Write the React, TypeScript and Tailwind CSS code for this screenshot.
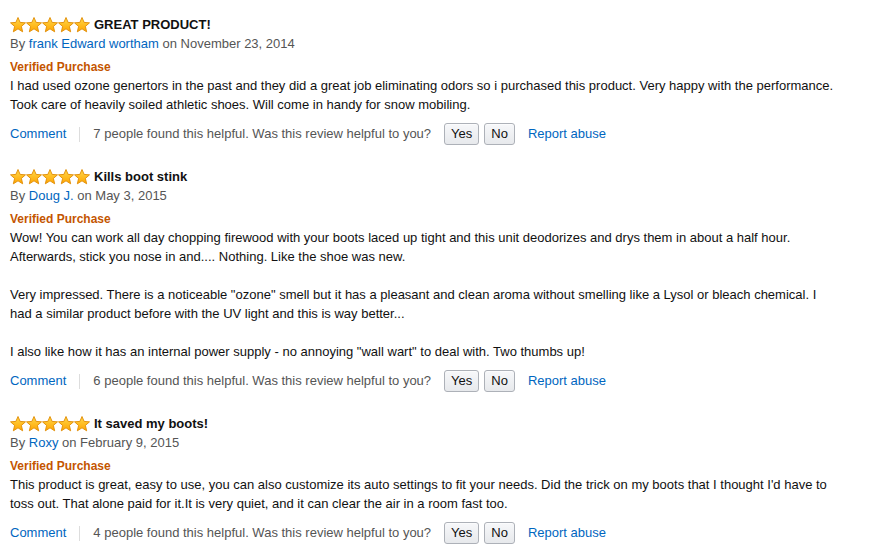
import React from 'react';

type Review = {
  title: string;
  author: string;
  date: string;
  paragraphs: string[];
  helpful: number;
};

const REVIEWS: Review[] = [
  {
    title: 'GREAT PRODUCT!',
    author: 'frank Edward wortham',
    date: 'November 23, 2014',
    paragraphs: [
      'I had used ozone genertors in the past and they did a great job eliminating odors so i purchased this product. Very happy with the performance. Took care of heavily soiled athletic shoes. Will come in handy for snow mobiling.',
    ],
    helpful: 7,
  },
  {
    title: 'Kills boot stink',
    author: 'Doug J.',
    date: 'May 3, 2015',
    paragraphs: [
      'Wow! You can work all day chopping firewood with your boots laced up tight and this unit deodorizes and drys them in about a half hour. Afterwards, stick you nose in and.... Nothing. Like the shoe was new.',
      'Very impressed. There is a noticeable "ozone" smell but it has a pleasant and clean aroma without smelling like a Lysol or bleach chemical. I had a similar product before with the UV light and this is way better...',
      'I also like how it has an internal power supply - no annoying "wall wart" to deal with. Two thumbs up!',
    ],
    helpful: 6,
  },
  {
    title: 'It saved my boots!',
    author: 'Roxy',
    date: 'February 9, 2015',
    paragraphs: [
      "This product is great, easy to use, you can also customize its auto settings to fit your needs. Did the trick on my boots that I thought I'd have to toss out. That alone paid for it.It is very quiet, and it can clear the air in a room fast too.",
    ],
    helpful: 4,
  },
];

const Star = () => (
  <svg width="16" height="16" viewBox="0 0 16 16" className="block overflow-visible">
    <defs>
      <linearGradient id="starFill" x1="0" y1="0" x2="0" y2="1">
        <stop offset="0" stopColor="#ffd84a" />
        <stop offset="1" stopColor="#ffa500" />
      </linearGradient>
    </defs>
    <path
      d="M8 0.5 L10.1 5.4 L15.5 5.85 L11.4 9.4 L12.65 14.8 L8 11.85 L3.35 14.8 L4.6 9.4 L0.5 5.85 L5.9 5.4 Z"
      fill="url(#starFill)"
      stroke="#e08a00"
      strokeWidth="0.9"
      strokeLinejoin="round"
    />
  </svg>
);

const Stars = () => (
  <div className="flex items-center">
    {[0, 1, 2, 3, 4].map((i) => (
      <Star key={i} />
    ))}
  </div>
);

const VoteButton = ({ label }: { label: string }) => (
  <button className="h-[22px] rounded-[3px] border border-[#adb1b8] bg-gradient-to-b from-[#f7f8fa] to-[#e7e9ec] px-[6px] text-[13px] leading-[20px] text-[#111] shadow-[inset_0_1px_0_rgba(255,255,255,0.6)]">
    {label}
  </button>
);

const ReviewItem = ({ review }: { review: Review }) => (
  <div className="mb-[22px]">
    <div className="flex h-[19px] items-center gap-[4px]">
      <Stars />
      <span className="text-[13px] font-bold text-[#111]">{review.title}</span>
    </div>
    <div className="text-[13px] leading-[19px] text-[#555]">
      By <a className="text-[#0066c0]">{review.author}</a> on {review.date}
    </div>
    <div className="mt-[5px] text-[12px] leading-[18px] font-bold text-[#c45500]">
      Verified Purchase
    </div>
    <div className="text-[13px] leading-[19px] text-[#111]">
      {review.paragraphs.map((p, i) => (
        <p key={i} className={i > 0 ? 'mt-[19px]' : ''}>
          {p}
        </p>
      ))}
    </div>
    <div className="mt-[9px] flex h-[22px] items-center text-[13px] text-[#555]">
      <a className="text-[#0066c0]">Comment</a>
      <span className="mx-[13px] h-[15px] w-px bg-[#ddd]" />
      <span>
        {review.helpful} people found this helpful. Was this review helpful to you?
      </span>
      <div className="ml-[13px] flex gap-[5px]">
        <VoteButton label="Yes" />
        <VoteButton label="No" />
      </div>
      <a className="ml-[13px] text-[#0066c0]">Report abuse</a>
    </div>
  </div>
);

export default function App() {
  return (
    <div
      className="min-h-[553px] bg-white pt-[15px] pl-[10px]"
      style={{ fontFamily: '"Liberation Sans", Arial, sans-serif' }}
    >
      <div className="w-[828px]">
        {REVIEWS.map((r) => (
          <ReviewItem key={r.title} review={r} />
        ))}
      </div>
    </div>
  );
}
